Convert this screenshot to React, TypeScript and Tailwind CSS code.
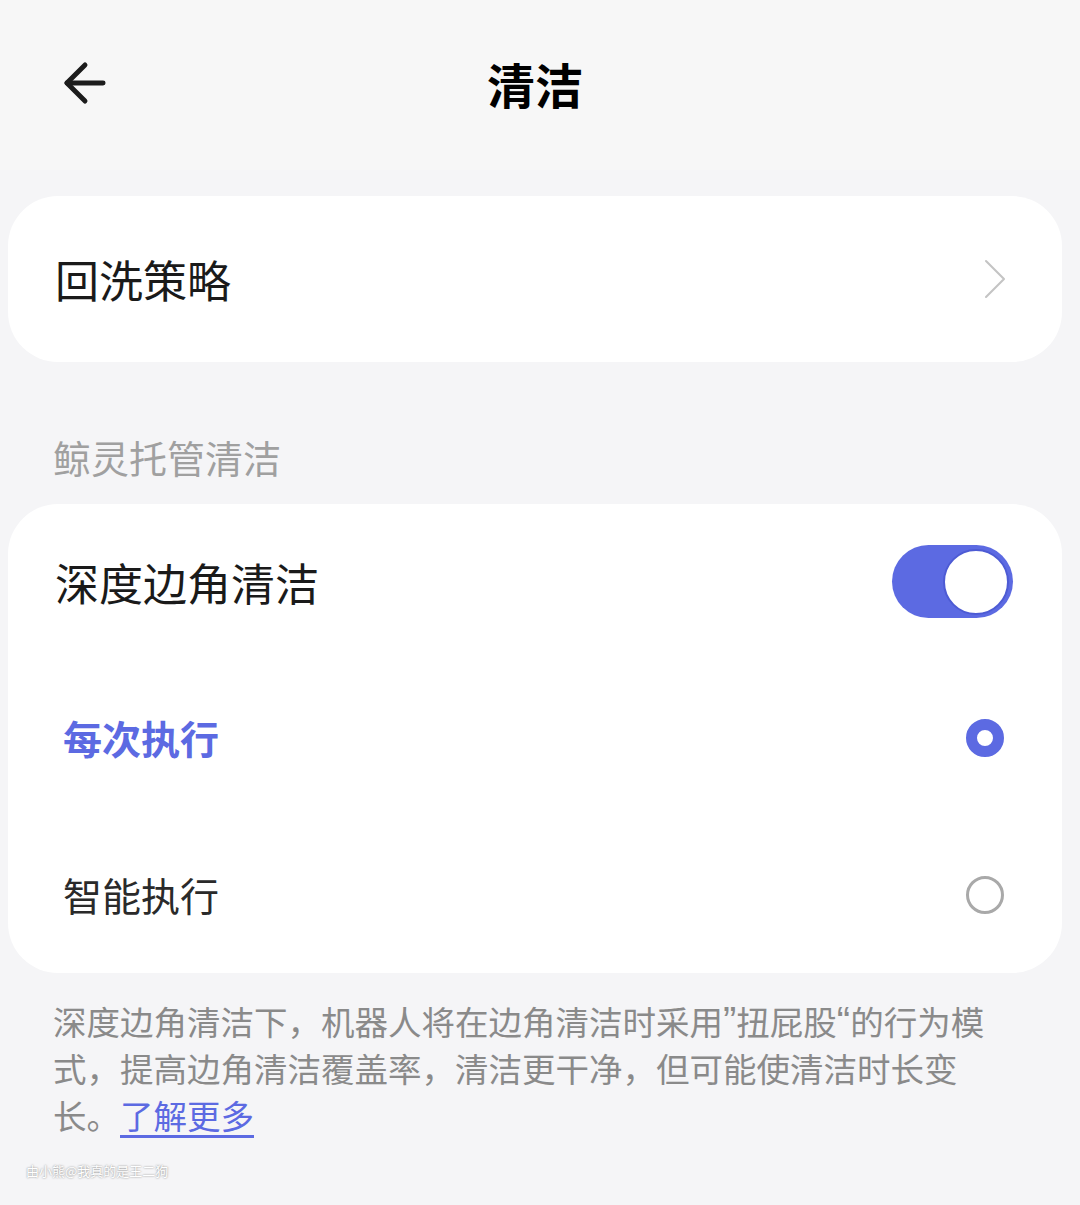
import { ArrowLeft, ChevronRight } from "lucide-react"

const font = { fontFamily: '"Noto Sans CJK SC", "Noto Sans", sans-serif' }

function Radio({ checked }: { checked: boolean }) {
  return checked ? (
    <span className="block h-[38px] w-[38px] rounded-full border-[11px] border-[#5c6ae2] bg-white" />
  ) : (
    <span className="block h-[38px] w-[38px] rounded-full border-[3px] border-[#a9a9a9] bg-white" />
  )
}

export default function App() {
  return (
    <div
      className="flex h-[1205px] w-[1080px] flex-col overflow-hidden bg-[#f5f5f7] text-[#1a1a1a]"
      style={font}
    >
      <header className="relative flex h-[170px] items-center bg-[#f7f7f7] pb-[4px]">
        <ArrowLeft
          className="ml-[54px] h-[62px] w-[62px] text-[#1c1c1c]"
          strokeWidth={1.9}
        />
        <h1 className="absolute left-[487px] text-[48px] font-bold leading-none text-black">
          清洁
        </h1>
      </header>

      <main className="flex flex-col pl-[8px] pr-[18px] pt-[26px]">
        <div className="flex h-[166px] items-center justify-between rounded-[50px] bg-white pl-[47px] pr-[31px]">
          <span className="text-[44px] leading-none">回洗策略</span>
          <ChevronRight
            className="h-[72px] w-[72px] text-[#c4c4c4]"
            strokeWidth={0.7}
          />
        </div>

        <div className="pl-[45px] pt-[76px] pb-[28px] text-[38px] leading-none text-[#a0a0a0]">
          鲸灵托管清洁
        </div>

        <div className="flex h-[469px] flex-col rounded-[50px] bg-white">
          <div className="flex h-[155px] items-center justify-between pl-[47px] pr-[49px]">
            <span className="text-[44px] leading-none">深度边角清洁</span>
            <span className="flex h-[73px] w-[121px] items-center justify-end rounded-full bg-[#5c6ae2] pr-[4px]">
              <span className="block h-[66px] w-[66px] rounded-full border-[2px] border-[#4d5bd4] bg-white" />
            </span>
          </div>
          <div className="flex h-[157px] items-center justify-between pl-[55px] pr-[58px]">
            <span className="text-[39px] font-bold leading-none text-[#5c6ae2]">
              每次执行
            </span>
            <Radio checked />
          </div>
          <div className="flex h-[157px] items-center justify-between pl-[55px] pr-[58px]">
            <span className="text-[39px] leading-none text-[#2a2a2a]">智能执行</span>
            <Radio checked={false} />
          </div>
        </div>

        <p className="w-[1000px] pl-[45px] pt-[24px] text-[33.5px] leading-[47px] text-[#8a8a8a]">
          深度边角清洁下，机器人将在边角清洁时采用
          <span className="font-['Liberation_Sans'] text-[40px] leading-[40px]">”</span>扭屁股
          <span className="font-['Liberation_Sans'] text-[40px] leading-[40px]">“</span>
          的行为模式，提高边角清洁覆盖率，清洁更干净，但可能使清洁时长变长。
          <a className="text-[#5c6ae2] underline underline-offset-[6px]">了解更多</a>
        </p>

        <div className="pl-[18px] pt-[26px] text-[13px] leading-none text-white [text-shadow:0_0_2px_#777]">
          由小熊@我真的是王二狗
        </div>
      </main>
    </div>
  )
}
